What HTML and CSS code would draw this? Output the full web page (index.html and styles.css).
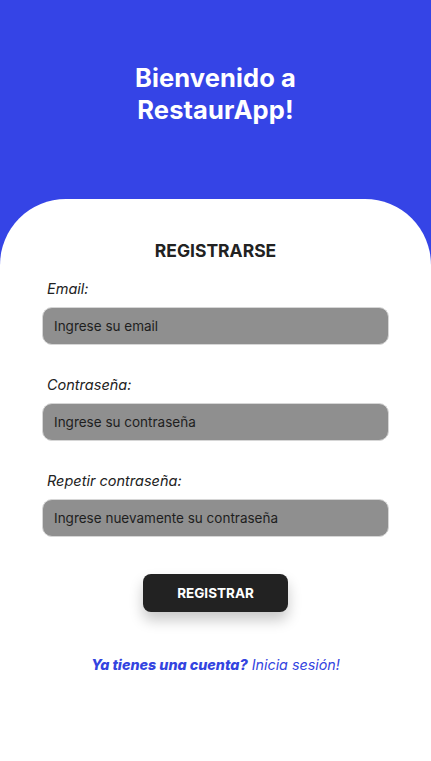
FILE: index.html
```html
<!DOCTYPE html>
<html lang="es">
<head>
<meta charset="utf-8">
<title>RestaurApp</title>
<link rel="stylesheet" href="styles.css">
</head>
<body>
<header class="hero">
  <h1 class="hero-title">Bienvenido a<br>RestaurApp!</h1>
</header>
<main class="panel">
  <h2 class="panel-title">REGISTRARSE</h2>
  <form class="form">
    <div class="field">
      <label class="field-label">Email:</label>
      <div class="field-input">Ingrese su email</div>
    </div>
    <div class="field">
      <label class="field-label">Contraseña:</label>
      <div class="field-input">Ingrese su contraseña</div>
    </div>
    <div class="field field-last">
      <label class="field-label">Repetir contraseña:</label>
      <div class="field-input">Ingrese nuevamente su contraseña</div>
    </div>
    <div class="actions">
      <button type="button" class="btn">REGISTRAR</button>
    </div>
  </form>
  <p class="login"><strong>Ya tienes una cuenta?</strong> Inicia sesión!</p>
</main>
</body>
</html>
```
FILE: styles.css
```css
* { box-sizing: border-box; }
html, body { margin: 0; padding: 0; height: 100%; }
body {
  background: #3544e6;
  font-family: Inter, "Noto Sans", sans-serif;
  display: flex;
  flex-direction: column;
}
.hero {
  height: 199px;
  padding-top: 62px;
}
.hero-title {
  margin: 0;
  color: #fff;
  text-align: center;
  font-size: 25.5px;
  line-height: 32px;
  font-weight: 700;
  letter-spacing: 0.1px;
}
.panel {
  flex: 1;
  background: #fff;
  border-radius: 66px 66px 0 0;
  padding: 40px 42px 0 42px;
}
.panel-title {
  margin: 0;
  text-align: center;
  font-size: 17.5px;
  line-height: 24px;
  font-weight: 700;
  color: #222;
}
.form {
  display: flex;
  flex-direction: column;
  margin-top: 16px;
}
.field {
  display: flex;
  flex-direction: column;
  margin-bottom: 30px;
}
.field-last { margin-bottom: 37px; }
.field-label {
  font-style: italic;
  font-size: 14.5px;
  line-height: 20px;
  color: #222;
  padding-left: 5px;
  margin-bottom: 8px;
}
.field-input {
  height: 38px;
  border-radius: 10px;
  background: #8f8f8f;
  border: 1px solid #d6d6d6;
  padding-left: 11px;
  display: flex;
  align-items: center;
  font-size: 13.5px;
  color: #1e1e1e;
}
.actions {
  display: flex;
  justify-content: center;
}
.btn {
  width: 145px;
  height: 38px;
  border: none;
  border-radius: 8px;
  background: #222;
  color: #fff;
  font-family: Inter, sans-serif;
  font-weight: 700;
  font-size: 13.5px;
  box-shadow: 0 8px 14px rgba(0,0,0,0.22);
}
.login {
  margin: 43px 0 0;
  text-align: center;
  font-style: italic;
  font-size: 14.3px;
  line-height: 20px;
  color: #3344e0;
}
.login strong { font-weight: 800; }
```
